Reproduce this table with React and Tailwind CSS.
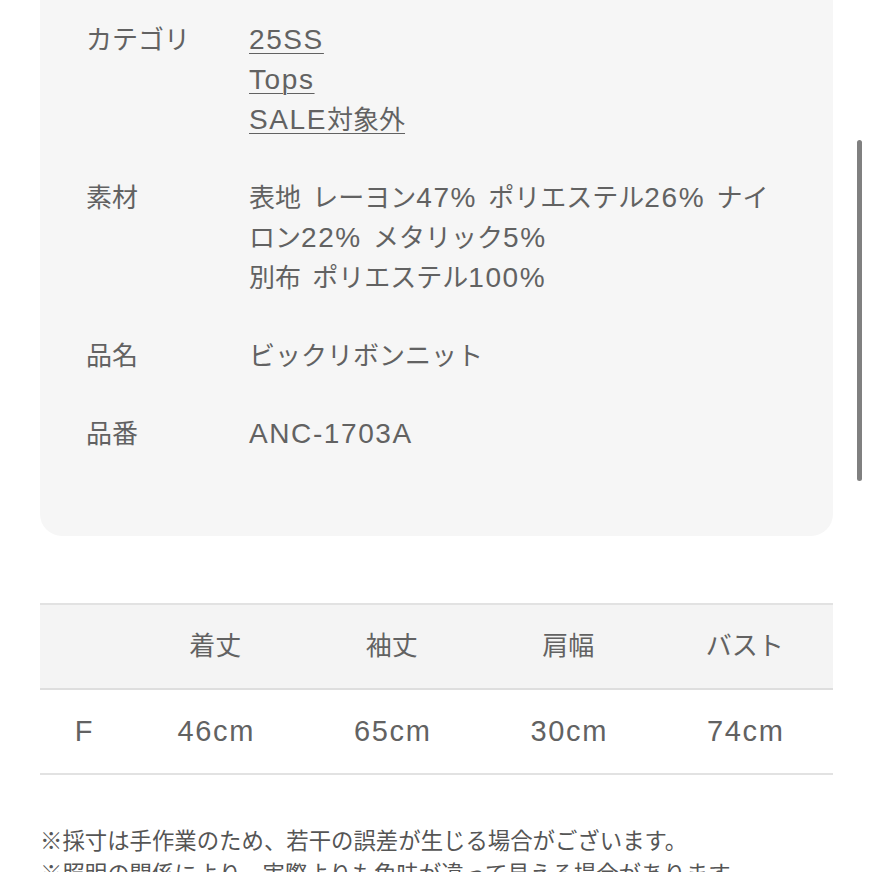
function T({ text }) {
  const parts = text.split(/([A-Za-z0-9%\-]+)/);
  return (
    <>
      {parts.map((p, i) =>
        i % 2 === 1 ? (
          <span key={i} className="text-[28px] tracking-[1.6px]">{p}</span>
        ) : (
          <span key={i}>{p}</span>
        )
      )}
    </>
  );
}

export default function App() {
  const rows = [
    {
      label: "カテゴリ",
      value: (
        <div className="flex flex-col items-start">
          <span className="underline decoration-1 underline-offset-[4px]"><T text="25SS" /></span>
          <span className="underline decoration-1 underline-offset-[4px]"><T text="Tops" /></span>
          <span className="underline decoration-1 underline-offset-[4px]"><T text="SALE対象外" /></span>
        </div>
      ),
    },
    {
      label: "素材",
      value: (
        <div className="flex flex-col [word-spacing:4px]">
          <span><T text="表地 レーヨン47% ポリエステル26% ナイ" /></span>
          <span><T text="ロン22% メタリック5%" /></span>
          <span><T text="別布 ポリエステル100%" /></span>
        </div>
      ),
    },
    { label: "品名", value: <span>ビックリボンニット</span> },
    { label: "品番", value: <span><T text="ANC-1703A" /></span> },
  ];
  const heads = ["", "着丈", "袖丈", "肩幅", "バスト"];
  const vals = ["F", "46cm", "65cm", "30cm", "74cm"];
  return (
    <div className="relative w-[872px] h-[872px] overflow-hidden bg-white text-[#626262] font-[family-name:'Liberation_Sans','Noto_Sans_CJK_JP',sans-serif]">
      <div className="w-[793px] ml-[40px]">
        <div className="bg-[#f6f6f6] rounded-b-[22px] pt-[20px] pb-[82px] pl-[46px] flex flex-col gap-[38px] text-[26px] leading-[40px]">
          {rows.map((r) => (
            <div key={r.label} className="flex">
              <div className="w-[163px] shrink-0">{r.label}</div>
              <div>{r.value}</div>
            </div>
          ))}
        </div>
        <div className="mt-[67px] border-t-2 border-[#e2e2e2] text-[26px]">
          <div className="grid grid-cols-[87px_repeat(4,1fr)] h-[85px] items-center bg-[#f4f4f4] border-b-2 border-[#dedede]">
            {heads.map((h, i) => (
              <div key={i} className="text-center">{h}</div>
            ))}
          </div>
          <div className="grid grid-cols-[87px_repeat(4,1fr)] h-[85px] items-center border-b-2 border-[#e2e2e2]">
            {vals.map((v, i) => (
              <div key={i} className="text-center pl-[2px] [&_span]:text-[29px]"><T text={v} /></div>
            ))}
          </div>
        </div>
        <div className="mt-[50px] text-[22.4px] leading-[33px] text-[#555]">
          <p>※採寸は手作業のため、若干の誤差が生じる場合がございます。</p>
          <p>※照明の関係により、実際よりも色味が違って見える場合があります。</p>
        </div>
      </div>
      <div className="absolute left-[857px] top-[140px] w-[5px] h-[341px] rounded-full bg-[#808080]" />
    </div>
  );
}
